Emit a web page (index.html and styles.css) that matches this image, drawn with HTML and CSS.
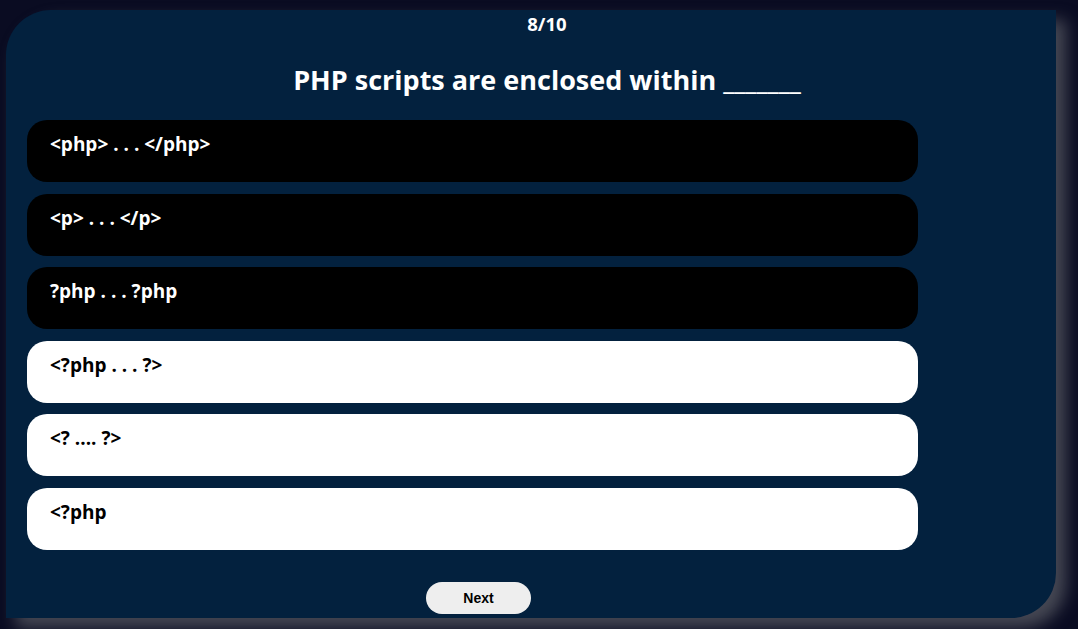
FILE: index.html
```html
<!DOCTYPE html>
<html lang="en">
<head>
<meta charset="utf-8">
<title>Quiz</title>
<link rel="stylesheet" href="styles.css">
</head>
<body>
<main class="quiz">
  <header class="quiz-head">
    <div class="counter">8/10</div>
    <h1 class="question">PHP scripts are enclosed within _______</h1>
  </header>
  <ul class="options">
    <li class="option dark">&lt;php&gt; . . . &lt;/php&gt;</li>
    <li class="option dark">&lt;p&gt; . . . &lt;/p&gt;</li>
    <li class="option dark">?php . . . ?php</li>
    <li class="option light">&lt;?php . . . ?&gt;</li>
    <li class="option light">&lt;? .... ?&gt;</li>
    <li class="option light">&lt;?php</li>
  </ul>
  <div class="quiz-foot">
    <button class="next">Next</button>
  </div>
</main>
</body>
</html>
```
FILE: styles.css
```css
html, body {
  margin: 0;
  padding: 0;
  height: 100%;
}
body {
  background: #0a0c22;
  font-family: "Open Sans", "Noto Sans", sans-serif;
  overflow: hidden;
}
.quiz {
  box-sizing: border-box;
  margin: 10px 22px 0 6px;
  height: 608px;
  background: #03213e;
  border-radius: 45px 0 45px 0;
  box-shadow: 10px 10px 16px rgba(90, 92, 100, 0.75);
  display: flex;
  flex-direction: column;
}
.quiz-head {
  display: flex;
  flex-direction: column;
  align-items: center;
  padding-left: 32px;
  color: #fff;
}
.counter {
  font-weight: 700;
  font-size: 18.5px;
  line-height: 24px;
  margin-top: 2px;
}
.question {
  margin: 26px 0 0;
  font-size: 27px;
  line-height: 36px;
  font-weight: 700;
}
.options {
  list-style: none;
  margin: 22px 0 0 21px;
  padding: 0;
  width: 891px;
  display: flex;
  flex-direction: column;
  gap: 11.6px;
}
.option {
  box-sizing: border-box;
  height: 62px;
  border-radius: 20px;
  padding: 11px 23px 0;
  font-size: 19px;
  line-height: 26px;
  font-weight: 700;
}
.option.dark {
  background: #000;
  color: #fff;
}
.option.light {
  background: #fff;
  color: #000;
}
.quiz-foot {
  margin: 32px 0 0 21px;
  width: 891px;
  padding-left: 399px;
  box-sizing: border-box;
}
.next {
  width: 105px;
  height: 32px;
  border: none;
  border-radius: 16px;
  background: #eeeeee;
  color: #000;
  font-family: "Liberation Sans", Arial, sans-serif;
  font-weight: 700;
  font-size: 14px;
  padding: 0;
}
```
